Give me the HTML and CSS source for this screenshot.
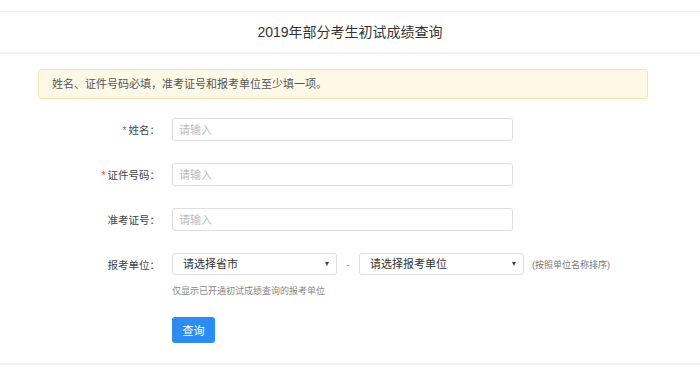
FILE: index.html
```html
<!DOCTYPE html>
<html lang="zh">
<head>
<meta charset="utf-8">
<title>2019年部分考生初试成绩查询</title>
<link rel="stylesheet" href="styles.css">
</head>
<body>
<div class="header">2019年部分考生初试成绩查询</div>
<div class="main">
  <div class="alert">姓名、证件号码必填，准考证号和报考单位至少填一项。</div>
  <form class="form">
    <div class="row">
      <label class="label"><span class="req">*</span>姓名：</label>
      <input class="input" type="text" placeholder="请输入">
    </div>
    <div class="row">
      <label class="label"><span class="req">*</span>证件号码：</label>
      <input class="input" type="text" placeholder="请输入">
    </div>
    <div class="row">
      <label class="label">准考证号：</label>
      <input class="input" type="text" placeholder="请输入">
    </div>
    <div class="row row-select">
      <label class="label">报考单位：</label>
      <div class="select sel1"><span>请选择省市</span><i class="arrow"></i></div>
      <span class="dash">-</span>
      <div class="select sel2"><span>请选择报考单位</span><i class="arrow"></i></div>
      <span class="note">(按照单位名称排序)</span>
    </div>
    <div class="hint">仅显示已开通初试成绩查询的报考单位</div>
    <div class="actions"><button type="button" class="btn">查询</button></div>
  </form>
</div>
</body>
</html>
```
FILE: styles.css
```css
html, body {
  margin: 0;
  padding: 0;
  background: #fff;
  font-family: "Liberation Sans", "Noto Sans CJK SC", sans-serif;
  color: #333;
}
.header {
  margin-top: 11px;
  border-top: 1px solid #eeeeee;
  border-bottom: 2px solid #f2f2f2;
  height: 40px;
  line-height: 40px;
  text-align: center;
  font-size: 14px;
  color: #333;
}
.main {
  padding: 15px 0 20px;
  border-bottom: 2px solid #f2f2f2;
}
.alert {
  margin: 0 52px 0 38px;
  height: 28px;
  line-height: 28px;
  border: 1px solid #f8e3a8;
  background: #fef9e7;
  border-radius: 3px;
  padding-left: 13px;
  font-size: 11px;
  color: #555;
}
.form {
  margin: 19px 0 0;
}
.row {
  display: flex;
  align-items: center;
  height: 23px;
  margin-bottom: 22px;
}
.row-select {
  height: 22px;
  margin-bottom: 0;
}
.label {
  width: 160px;
  text-align: right;
  margin-right: 12px;
  font-size: 10.5px;
  color: #444;
  flex-shrink: 0;
}
.req {
  color: #e5492a;
  margin-right: 2px;
}
.input {
  box-sizing: border-box;
  width: 341px;
  height: 23px;
  border: 1px solid #dcdee2;
  border-radius: 3px;
  padding: 0 6px;
  font-family: inherit;
  font-size: 11px;
  color: #333;
  outline: none;
}
.input::placeholder {
  color: #b8bcc4;
}
.select {
  position: relative;
  box-sizing: border-box;
  height: 22px;
  border: 1px solid #dcdee2;
  border-radius: 3px;
  padding-left: 10px;
  line-height: 20px;
  font-size: 11px;
  color: #333;
  background: #fff;
}
.sel1 { width: 165px; }
.sel2 { width: 165px; }
.arrow {
  position: absolute;
  right: 7px;
  top: 8px;
  width: 0;
  height: 0;
  border-left: 2.5px solid transparent;
  border-right: 2.5px solid transparent;
  border-top: 4px solid #444;
}
.dash {
  width: 22px;
  text-align: center;
  font-size: 11px;
  color: #999;
}
.note {
  margin-left: 8px;
  font-size: 9px;
  color: #777;
}
.hint {
  margin: 9px 0 0 172px;
  font-size: 9px;
  color: #888;
  line-height: 14px;
}
.actions {
  margin: 19px 0 0 172px;
}
.btn {
  width: 43px;
  height: 26px;
  border: none;
  border-radius: 3px;
  background: #2d8cf0;
  color: #fff;
  font-family: inherit;
  font-size: 11px;
  padding: 0;
  display: block;
}
```
